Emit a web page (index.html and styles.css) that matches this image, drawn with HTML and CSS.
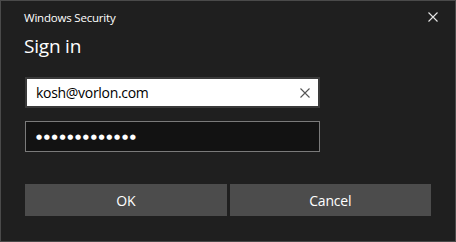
FILE: index.html
```html
<!DOCTYPE html>
<html lang="en">
<head>
    <meta charset="UTF-8">
    <title>Windows Security</title>
    <link rel="stylesheet" href="styles.css">
</head>
<body>

<div class="dialog">
    <div class="titlebar">
        <span class="title">Windows Security</span>
        <span class="close">
            <svg width="10" height="10" viewBox="0 0 10 10">
                <path d="M0.5 0.5 L9.5 9.5 M9.5 0.5 L0.5 9.5" stroke="#e6e6e6" stroke-width="1.1" fill="none"/>
            </svg>
        </span>
    </div>

    <div class="content">
        <h1>Sign in</h1>

        <div class="field field-user">
            <span class="field-text">kosh@vorlon.com</span>
            <svg class="clear" width="10" height="10" viewBox="0 0 10 10">
                <path d="M0.5 0.5 L9.5 9.5 M9.5 0.5 L0.5 9.5" stroke="#555" stroke-width="1.1" fill="none"/>
            </svg>
        </div>

        <div class="field field-pass">
            <span class="dots">●●●●●●●●●●●●●</span>
        </div>

        <div class="buttons">
            <button class="btn">OK</button>
            <button class="btn">Cancel</button>
        </div>
    </div>
</div>

</body>
</html>
```

FILE: styles.css
```css
body {
    margin: 0;
    padding: 0;
    background: #1f1f1f;
    font-family: "Open Sans", "Noto Sans", sans-serif;
}
.dialog {
    width: 456px;
    height: 242px;
    box-sizing: border-box;
    border: 1px solid #4a4a4a;
    background-color: #1f1f1f;
    color: #ffffff;
}
.titlebar {
    display: flex;
    justify-content: space-between;
    align-items: center;
    height: 32px;
    padding: 0 17px 0 23px;
}
.title {
    font-size: 11.5px;
    letter-spacing: -0.2px;
}
.close {
    display: flex;
}
.content {
    padding: 0 24px;
}
h1 {
    font-size: 19px;
    font-weight: normal;
    margin: 0 0 0 -1px;
    line-height: 26px;
    letter-spacing: -0.2px;
}
.field {
    width: 295px;
    height: 31px;
    box-sizing: border-box;
    display: flex;
    align-items: center;
    justify-content: space-between;
    padding: 0 8px 0 9px;
}
.field-user {
    margin-top: 18px;
    background-color: #ffffff;
    border: 2px solid #3a3a3a;
    color: #000000;
}
.field-text {
    font-size: 14px;
    letter-spacing: -0.3px;
}
.field-pass {
    margin-top: 13px;
    background-color: #121212;
    border: 1px solid #7a7a7a;
    padding-left: 10px;
}
.dots {
    font-family: "DejaVu Sans", sans-serif;
    font-size: 7px;
    letter-spacing: 1.7px;
    color: #ffffff;
}
.buttons {
    display: flex;
    gap: 3px;
    margin-top: 32px;
    width: 406px;
}
.btn {
    flex: 1;
    height: 32px;
    border: none;
    background-color: #4c4c4c;
    color: #ffffff;
    font-family: "Open Sans", "Noto Sans", sans-serif;
    font-size: 14px;
    letter-spacing: -0.2px;
    padding: 0;
}
```
